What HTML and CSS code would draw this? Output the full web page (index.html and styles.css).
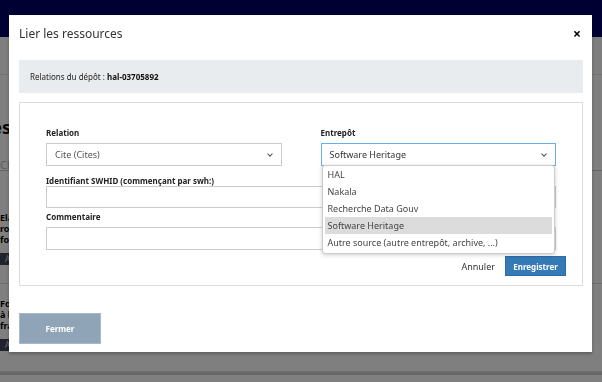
FILE: index.html
```html
<!DOCTYPE html>
<html lang="fr">
<head>
    <meta charset="UTF-8">
    <title>Lier les ressources</title>
    <link rel="stylesheet" href="styles.css">
</head>
<body>
    <div class="page">
        <div class="topbar"></div>
        <div class="subbar"></div>
        <div class="page-content">
            <div class="page-title"><span>Mes ressources</span></div>
            <div class="page-tabs">Ch</div>
            <div class="doc">
                <div class="doc-text">Elaboration of problems<br>rolling information<br>for the data</div>
                <span class="badge">A</span>
            </div>
            <div class="doc second">
                <div class="doc-text">Formation<br>à l'usage<br>francophone</div>
                <span class="badge">A</span>
            </div>
            <div class="doc-last">Visibilité des contributions et accessibilité</div>
        </div>
    </div>

    <div class="backdrop"></div>

    <div class="modal">
        <div class="modal-header">
            <h4>Lier les ressources</h4>
            <span class="close">&times;</span>
        </div>
        <div class="modal-body">
            <div class="info">Relations du dépôt : <b>hal-03705892</b></div>
            <div class="panel">
                <div class="row">
                    <div class="field">
                        <label>Relation</label>
                        <div class="select">Cite (Cites)<span class="caret"></span></div>
                    </div>
                    <div class="field">
                        <label>Entrepôt</label>
                        <div class="select focus">Software Heritage<span class="caret"></span></div>
                        <ul class="dropdown">
                            <li>HAL</li>
                            <li>Nakala</li>
                            <li>Recherche Data Gouv</li>
                            <li class="active">Software Heritage</li>
                            <li>Autre source (autre entrepôt, archive, ...)</li>
                        </ul>
                    </div>
                </div>
                <label class="swhid-label">Identifiant SWHID (commençant par swh:)</label>
                <div class="input"></div>
                <label class="comment-label">Commentaire</label>
                <div class="input comment"></div>
                <div class="actions">
                    <span class="cancel">Annuler</span>
                    <button class="primary">Enregistrer</button>
                </div>
            </div>
        </div>
        <div class="modal-footer">
            <button class="close-btn">Fermer</button>
        </div>
    </div>
</body>
</html>
```

FILE: styles.css
```css
body {
    margin: 0;
    font-family: "Noto Sans", sans-serif;
    color: #333;
    background: #fff;
    overflow: hidden;
    height: 382px;
}
.topbar {
    height: 37px;
    background: #010066;
}
.subbar {
    height: 37px;
    background: #fcfcfc;
    border-bottom: 1px solid #e4e4e4;
}
.page-content {
    margin-left: -60px;
}
.page-title {
    display: flex;
    justify-content: flex-end;
    width: 71px;
    font-size: 18px;
    font-weight: bold;
    line-height: 24px;
    margin-top: 40px;
    color: #111;
    white-space: nowrap;
}
.page-tabs {
    font-size: 11px;
    line-height: 14px;
    color: #bbb;
    border-bottom: 1px solid #ccc;
    padding: 19px 0 0 60px;
    height: 12px;
}
.doc {
    border-bottom: 1px solid #ddd;
    padding: 41px 0 16px 60px;
}
.doc.second {
    padding-top: 14px;
    padding-bottom: 18px;
}
.doc-text {
    font-size: 9px;
    font-weight: bold;
    line-height: 11px;
    color: #000;
}
.badge {
    display: inline-block;
    background: #44445e;
    color: #ddd;
    font-size: 8px;
    line-height: 12px;
    padding: 0 5px;
    margin-top: 4px;
}
.doc-last {
    font-size: 10px;
    font-weight: bold;
    padding: 8px 0 0 70px;
    border-top: 3px solid #d0d0d0;
    color: #000;
}
.backdrop {
    position: fixed;
    inset: 0;
    background: rgba(0, 0, 0, 0.5);
}
.modal {
    position: absolute;
    left: 9px;
    top: 15px;
    width: 583px;
    height: 337px;
    background: #fff;
    box-shadow: 0 2px 3px rgba(0, 0, 0, 0.25);
}
.modal-header {
    display: flex;
    justify-content: space-between;
    align-items: center;
    padding: 10px 11px 0 10px;
    height: 16px;
}
.modal-header h4 {
    margin: 0;
    font-size: 12px;
    font-weight: normal;
    color: #333;
}
.close {
    font-size: 14px;
    font-weight: bold;
    color: #000;
}
.modal-body {
    padding: 19px 9px 0 10px;
}
.info {
    background: #e9ecef;
    font-size: 8px;
    line-height: 11px;
    padding: 11px 11px;
    color: #222;
    margin-bottom: 9px;
}
.info b {
    color: #111;
}
.panel {
    border: 1px solid #ddd;
    padding: 25px 26px 0 26px;
    height: 157px;
}
.row {
    display: flex;
    gap: 39px;
}
.field {
    flex: 1;
    position: relative;
}
label {
    display: block;
    font-size: 8px;
    line-height: 10px;
    font-weight: bold;
    color: #222;
    margin-bottom: 5px;
}
.swhid-label {
    margin-top: 10px;
    margin-bottom: 0;
}
.comment-label {
    margin-top: 4px;
    margin-bottom: 5px;
}
.select {
    position: relative;
    height: 21px;
    border: 1px solid #ccc;
    font-size: 9px;
    line-height: 21px;
    padding: 0 8px;
    color: #555;
}
.select.focus {
    border-color: #66afe9;
    color: #333;
}
.caret {
    position: absolute;
    right: 9px;
    top: 8px;
    width: 3px;
    height: 3px;
    border-right: 1px solid #555;
    border-bottom: 1px solid #555;
    transform: rotate(45deg);
}
.input {
    height: 20px;
    border: 1px solid #ccc;
}
.input.comment {
    height: 21px;
}
.dropdown {
    position: absolute;
    left: 1px;
    right: 1px;
    top: 37px;
    margin: 0;
    padding: 0 2px 2px;
    list-style: none;
    background: #fff;
    border: 1px solid #ccc;
    border-radius: 3px;
    box-shadow: 0 1px 4px rgba(0, 0, 0, 0.2);
    z-index: 2;
}
.dropdown li {
    font-size: 9px;
    line-height: 17px;
    padding: 0 3px;
    color: #444;
}
.dropdown li.active {
    background: #dcdcdc;
}
.actions {
    display: flex;
    justify-content: flex-end;
    align-items: center;
    gap: 10px;
    margin-top: 6px;
    margin-right: -10px;
}
.cancel {
    font-size: 9px;
    color: #333;
}
.primary {
    background: #337ab7;
    color: #fff;
    border: 1px solid #2e6da4;
    font-family: "Noto Sans", sans-serif;
    font-size: 8px;
    font-weight: bold;
    height: 20px;
    width: 61px;
    padding: 0;
}
.modal-footer {
    padding: 27px 10px 0;
}
.close-btn {
    background: #8fa4b7;
    color: #fff;
    border: 1px solid #a9b8c6;
    font-family: "Noto Sans", sans-serif;
    font-size: 8px;
    font-weight: bold;
    width: 82px;
    height: 31px;
}
```
